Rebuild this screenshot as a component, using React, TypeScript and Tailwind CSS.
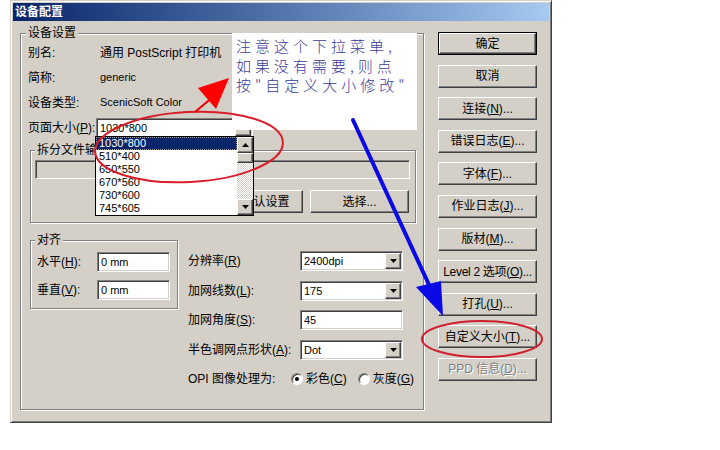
import type { ReactNode } from "react";

const raised =
  "border border-t-white border-l-white border-r-[#404040] border-b-[#404040] shadow-[inset_-1px_-1px_0_#808080,inset_1px_1px_0_#d4d0c8]";
const sunken =
  "border border-t-[#808080] border-l-[#808080] border-r-white border-b-white shadow-[inset_1px_1px_0_#404040,inset_-1px_-1px_0_#d4d0c8]";
const etched = "border border-[#808080] shadow-[inset_1px_1px_0_#fff,1px_1px_0_#fff]";

function Arrow({ up }: { up?: boolean }) {
  return (
    <svg width="7" height="4" viewBox="0 0 7 4">
      <path d={up ? "M3.5 0L7 4H0Z" : "M0 0H7L3.5 4Z"} fill="#000" />
    </svg>
  );
}

function Btn({ children, className = "" }: { children: ReactNode; className?: string }) {
  return (
    <div className={`flex h-[23px] items-center justify-center whitespace-nowrap ${raised} ${className}`}>
      {children}
    </div>
  );
}

function Combo({ value, className = "" }: { value: string; className?: string }) {
  return (
    <div className={`flex h-[20px] bg-white p-[1px] ${sunken} ${className}`}>
      <div className="flex-1 pl-[2px] text-[11px] leading-[16px]">{value}</div>
      <div className={`flex h-[16px] w-[16px] items-center justify-center bg-[#d4d0c8] ${raised}`}>
        <Arrow />
      </div>
    </div>
  );
}

function Edit({ value, className = "" }: { value: string; className?: string }) {
  return (
    <div className={`h-[20px] bg-white pl-[3px] text-[11px] leading-[18px] ${sunken} ${className}`}>
      {value}
    </div>
  );
}

function Radio({ checked }: { checked?: boolean }) {
  return (
    <span className="flex h-[12px] w-[12px] items-center justify-center rounded-full border border-t-[#808080] border-l-[#808080] border-r-white border-b-white bg-white shadow-[inset_1px_1px_0_#404040]">
      {checked && <span className="h-[4px] w-[4px] rounded-full bg-black" />}
    </span>
  );
}

function Key({ k }: { k: string }) {
  return <span className="underline underline-offset-1">{k}</span>;
}

const sizes = ["1030*800", "510*400", "650*550", "670*560", "730*600", "745*605"];

export default function App() {
  return (
    <div className="relative h-[450px] w-[720px] overflow-hidden bg-white font-['Liberation_Sans','Noto_Sans_CJK_SC',sans-serif] text-[12px] text-black">
      {/* DIALOG */}
      <div className="ml-[10px] h-[423px] w-[542px] border border-t-[#d4d0c8] border-l-[#d4d0c8] border-r-[#404040] border-b-[#404040] bg-[#d4d0c8] p-[2px] shadow-[inset_1px_1px_0_#fff,inset_-1px_-1px_0_#808080]">
        <div className="flex h-[18px] items-center bg-linear-to-r from-[#0a246a] to-[#a6caf0] pl-[2px] font-bold text-white">
          设备配置
        </div>

        <div className="flex items-start">
          {/* LEFT GROUP */}
          <fieldset className={`ml-[7px] mt-[5px] h-[384px] w-[404px] ${etched}`}>
            <legend className="ml-[5px] bg-[#d4d0c8] px-[2px] leading-[14px]">设备设置</legend>
            <div className="px-[7px]">
              <div className="flex h-[25px] items-center">
                <span className="w-[72px]">别名:</span>
                <span>通用 PostScript 打印机</span>
              </div>
              <div className="flex h-[25px] items-center">
                <span className="w-[72px]">简称:</span>
                <span className="text-[11px]">generic</span>
              </div>
              <div className="flex h-[25px] items-center">
                <span className="w-[72px]">设备类型:</span>
                <span className="text-[11px]">ScenicSoft Color</span>
              </div>
              <div className="flex h-[25px] items-center">
                <span className="w-[68px]">
                  页面大小(<Key k="P" />):
                </span>
                <div className="relative">
                  <Combo value="1030*800" className="h-[19px] w-[157px]" />
                  {/* open dropdown list */}
                  <div className="absolute left-[-1px] top-[18px] z-10 flex h-[80px] w-[159px] border border-black bg-white">
                    <div className="flex-1 text-[11px]">
                      {sizes.map((s, i) => (
                        <div
                          key={s}
                          className={`h-[13px] pl-[3px] leading-[13px] ${i === 0 ? "bg-[#0a246a] text-white outline-1 outline-dotted outline-offset-[-1px] outline-[#a0a0a0]" : ""}`}
                        >
                          {s}
                        </div>
                      ))}
                    </div>
                    <div className="flex w-[16px] flex-col bg-[repeating-conic-gradient(#d4d0c8_0_25%,#ffffff_0_50%)] bg-[length:2px_2px]">
                      <div className={`flex h-[16px] items-center justify-center bg-[#d4d0c8] ${raised}`}>
                        <Arrow up />
                      </div>
                      <div className={`h-[10px] bg-[#d4d0c8] ${raised}`} />
                      <div className="flex-1" />
                      <div className={`flex h-[16px] items-center justify-center bg-[#d4d0c8] ${raised}`}>
                        <Arrow />
                      </div>
                    </div>
                  </div>
                </div>
              </div>

              <fieldset className={`ml-[2px] mt-[3px] w-[386px] pb-[9px] ${etched}`}>
                <legend className="ml-[4px] bg-[#d4d0c8] px-[2px] leading-[14px]">拆分文件输</legend>
                <div className={`ml-[4px] mr-[5px] mt-[3px] h-[19px] bg-[#d4d0c8] ${sunken}`} />
                <div className="mt-[11px] flex justify-end gap-[7px] pr-[6px]">
                  <Btn className="w-[75px]">默认设置</Btn>
                  <Btn className="w-[99px]">选择...</Btn>
                </div>
              </fieldset>

              <div className="mt-[10px] flex items-start">
                <fieldset className={`ml-[2px] w-[148px] pb-[8px] ${etched}`}>
                  <legend className="ml-[4px] bg-[#d4d0c8] px-[2px] leading-[14px]">对齐</legend>
                  <div className="pl-[6px] pt-[5px]">
                    <div className="flex h-[20px] items-center">
                      <span className="w-[60px]">
                        水平(<Key k="H" />):
                      </span>
                      <Edit value="0 mm" className="w-[73px]" />
                    </div>
                    <div className="mt-[8px] flex h-[20px] items-center">
                      <span className="w-[60px]">
                        垂直(<Key k="V" />):
                      </span>
                      <Edit value="0 mm" className="w-[73px]" />
                    </div>
                  </div>
                </fieldset>

                <div className="ml-[10px] flex flex-col gap-[9.5px] pt-[18px]">
                  <div className="flex h-[20px] items-center">
                    <span className="w-[112px]">
                      分辨率(<Key k="R" />)
                    </span>
                    <Combo value="2400dpi" className="w-[103px]" />
                  </div>
                  <div className="flex h-[20px] items-center">
                    <span className="w-[112px]">
                      加网线数(<Key k="L" />):
                    </span>
                    <Combo value="175" className="w-[103px]" />
                  </div>
                  <div className="flex h-[20px] items-center">
                    <span className="w-[112px]">
                      加网角度(<Key k="S" />):
                    </span>
                    <Edit value="45" className="w-[103px]" />
                  </div>
                  <div className="flex h-[20px] items-center">
                    <span className="w-[112px]">
                      半色调网点形状(<Key k="A" />):
                    </span>
                    <Combo value="Dot" className="w-[103px]" />
                  </div>
                  <div className="flex h-[20px] items-center">
                    <span className="w-[103px]">OPI 图像处理为:</span>
                    <Radio checked />
                    <span className="ml-[3px]">
                      彩色(<Key k="C" />)
                    </span>
                    <span className="ml-[11px]">
                      <Radio />
                    </span>
                    <span className="ml-[3px]">
                      灰度(<Key k="G" />)
                    </span>
                  </div>
                </div>
              </div>
            </div>
          </fieldset>

          {/* RIGHT BUTTONS */}
          <div className="ml-[14px] mt-[11px] flex w-[99px] flex-col gap-[9.6px]">
            <div className="h-[23px] border border-black">
              <div className={`flex h-full items-center justify-center ${raised}`}>确定</div>
            </div>
            <Btn>取消</Btn>
            <Btn>
              连接(<Key k="N" />)...
            </Btn>
            <Btn>
              错误日志(<Key k="E" />)...
            </Btn>
            <Btn>
              字体(<Key k="F" />)...
            </Btn>
            <Btn>
              作业日志(<Key k="J" />)...
            </Btn>
            <Btn>
              版材(<Key k="M" />)...
            </Btn>
            <Btn className="tracking-[-0.3px]">
              Level 2 选项(<Key k="O" />)...
            </Btn>
            <Btn>
              打孔(<Key k="U" />)...
            </Btn>
            <Btn>
              自定义大小(<Key k="T" />)...
            </Btn>
            <Btn className="text-[#808080] [text-shadow:1px_1px_0_#fff]">
              PPD 信息(<Key k="D" />)...
            </Btn>
          </div>
        </div>
      </div>

      {/* pasted note */}
      <div className="absolute left-[232px] top-[33px] z-20 h-[97px] w-[185px] bg-white pl-[4px] pt-[3px] font-['Noto_Sans_CJK_SC',sans-serif] text-[15px] font-light leading-[19.5px] tracking-[4px] text-[#3b3b9b]">
        <div>注意这个下拉菜单,</div>
        <div>如果没有需要,则点</div>
        <div>按"自定义大小修改"</div>
      </div>

      {/* hand-drawn marks */}
      <svg className="pointer-events-none absolute inset-0 z-30" width="720" height="450" viewBox="0 0 720 450">
        <ellipse cx="189" cy="147" rx="94" ry="35" transform="rotate(-3 189 147)" fill="none" stroke="#d81e2a" strokeWidth="2" />
        <line x1="195" y1="112" x2="214" y2="96" stroke="#ee0000" strokeWidth="2" />
        <polygon points="198,88 229,78 216,109" fill="#ff0000" />
        <line x1="353" y1="120" x2="430" y2="287" stroke="#0a0ae6" strokeWidth="4" strokeLinecap="round" />
        <polygon points="416,287 441,281 443,316" fill="#0a0ae6" />
        <ellipse cx="482" cy="339" rx="60" ry="18" fill="none" stroke="#d02030" strokeWidth="2" />
      </svg>
    </div>
  );
}
